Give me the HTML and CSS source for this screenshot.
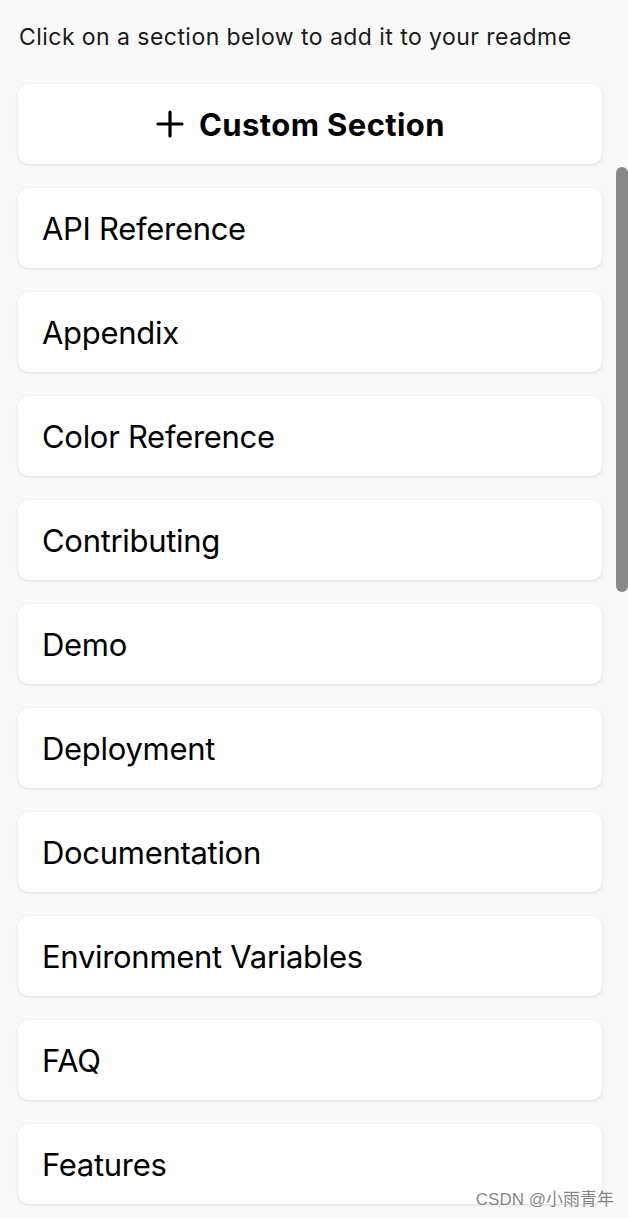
FILE: index.html
```html
<!DOCTYPE html>
<html>
<head>
<meta charset="utf-8">
<link rel="stylesheet" href="styles.css">
</head>
<body>
<div class="page">
  <p class="hint">Click on a section below to add it to your readme</p>
  <ul class="list">
    <li class="card custom">
      <svg class="plus" viewBox="0 0 28 28" width="28" height="28"><path d="M14 2v24M2 14h24" stroke="#000" stroke-width="3.2" stroke-linecap="round" fill="none"/></svg>
      <span>Custom Section</span>
    </li>
    <li class="card">API Reference</li>
    <li class="card">Appendix</li>
    <li class="card">Color Reference</li>
    <li class="card">Contributing</li>
    <li class="card">Demo</li>
    <li class="card">Deployment</li>
    <li class="card">Documentation</li>
    <li class="card">Environment Variables</li>
    <li class="card">FAQ</li>
    <li class="card">Features</li>
  </ul>
  <div class="scrollbar"></div>
  <div class="watermark">CSDN @小雨青年</div>
</div>
</body>
</html>
```
FILE: styles.css
```css
html, body {
  margin: 0;
  padding: 0;
  background: #f9f9f9;
  overflow: hidden;
}
.page {
  position: relative;
  height: 1218px;
  overflow: hidden;
  font-family: Inter, "Noto Sans CJK SC", sans-serif;
  color: #000;
}
.hint {
  margin: 0;
  padding: 24px 0 0 19px;
  font-size: 23px;
  letter-spacing: 0.45px;
  line-height: 26px;
  color: #1a1a1a;
}
.list {
  list-style: none;
  margin: 0;
  padding: 34px 26px 0 18px;
  display: flex;
  flex-direction: column;
  gap: 24px;
}
.card {
  height: 80px;
  box-sizing: border-box;
  background: #fff;
  border-radius: 10px;
  box-shadow: 0 1px 3px rgba(0,0,0,0.12), 0 0 1px rgba(0,0,0,0.04);
  display: flex;
  align-items: center;
  padding: 0 24px;
  font-size: 31px;
  letter-spacing: -0.3px;
}
.custom {
  justify-content: center;
  gap: 15px;
  font-weight: 700;
  font-size: 31px;
  letter-spacing: 0.4px;
  padding: 0 43px 0 24px;
}
.plus {
  display: block;
}
.scrollbar {
  position: absolute;
  right: 0;
  top: 167px;
  width: 12px;
  height: 425px;
  background: #888;
  border-radius: 6px;
}
.watermark {
  position: absolute;
  right: 14px;
  bottom: 8px;
  font-family: "Liberation Sans", "Noto Sans CJK SC", sans-serif;
  font-size: 17px;
  color: rgba(110,110,110,0.85);
}
```
